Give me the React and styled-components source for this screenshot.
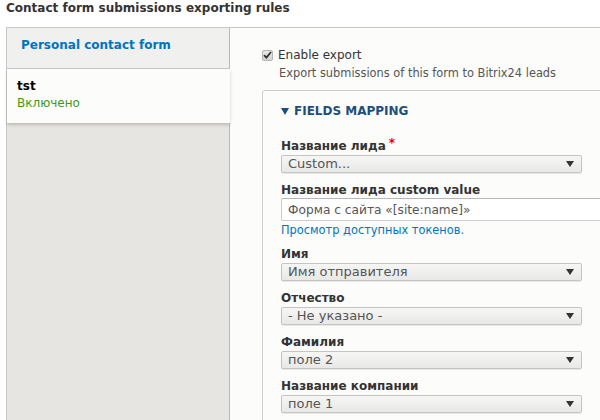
import React from "react";
import styled, { createGlobalStyle } from "styled-components";

const Global = createGlobalStyle`
  html, body { margin: 0; padding: 0; background: #fff; overflow: hidden; }
  body { font-family: "DejaVu Sans", "Liberation Sans", sans-serif; color: #333; }
  * { box-sizing: border-box; }
`;

const Page = styled.div`
  width: 600px;
  height: 420px;
  padding-left: 6px;
  overflow: hidden;
`;

const Title = styled.h2`
  margin: 0;
  font-size: 12px;
  font-weight: bold;
  line-height: 16px;
  padding-bottom: 11px;
  color: #333;
`;

const Tabs = styled.div`
  display: flex;
  border-top: 1px solid #c8c8c8;
  border-left: 1px solid #c8c8c8;
  height: 400px;
  width: 700px;
`;

const Menu = styled.div`
  width: 223px;
  flex: none;
  background: #e6e5e1;
  border-right: 1px solid #b8b8b6;
  display: flex;
  flex-direction: column;
`;

const MenuItem = styled.div`
  background: ${(p) => (p.$active ? "#fcfcfa" : "#f0f0ee")};
  border-bottom: ${(p) => (p.$active ? "0" : "1px solid #c8c8c8")};
  padding: ${(p) => (p.$active ? "9px 10px 11px" : "9px 14px 15px")};
  margin-right: ${(p) => (p.$active ? "-1px" : "0")};
  position: relative;
  z-index: ${(p) => (p.$active ? 1 : 0)};
  box-shadow: ${(p) => (p.$active ? "0 2px 3px rgba(0,0,0,0.18)" : "none")};
`;

const TabName = styled.div`
  font-size: 12px;
  font-weight: bold;
  line-height: ${(p) => (p.$active ? "17px" : "16px")};
  color: ${(p) => (p.$active ? "#000" : "#0074bd")};
`;

const TabSummary = styled.div`
  font-size: 12px;
  line-height: 17px;
  color: #3a9a1a;
`;

const Pane = styled.div`
  flex: 1;
  background: #fcfcfa;
  padding: 19px 0 0 32px;
`;

const CheckRow = styled.label`
  display: flex;
  align-items: center;
  gap: 5px;
  font-size: 12px;
  line-height: 16px;
  color: #333;
`;

const CheckBox = styled.span`
  width: 11px;
  height: 11px;
  border: 1px solid #b4b4b4;
  border-radius: 2px;
  background: linear-gradient(#e8e8e8, #d4d4d4);
  display: flex;
  align-items: center;
  justify-content: center;
`;

const Description = styled.div`
  font-size: 11.4px;
  line-height: 14px;
  color: #555;
  padding-left: 17px;
  margin-top: 3px;
`;

const Fieldset = styled.div`
  margin-top: 10px;
  width: 360px;
  border: 1px solid #cccccc;
  border-radius: 3px;
  background: #fcfcfa;
  padding: 13px 0 0 18px;
  height: 400px;
`;

const Legend = styled.div`
  display: flex;
  align-items: center;
  gap: 5px;
  font-size: 12px;
  font-weight: bold;
  line-height: 14px;
  text-transform: uppercase;
  color: #1d4f7c;
  margin-bottom: 20px;
`;

const Field = styled.div`
  display: flex;
  flex-direction: column;
  margin-bottom: ${(p) => p.$mb || 9}px;
`;

const Label = styled.div`
  font-size: 12px;
  font-weight: bold;
  line-height: 16px;
  color: #333;
  margin-bottom: ${(p) => p.$mb ?? 1}px;
`;

const Required = styled.span`
  color: #e00;
  font-size: 12px;
  margin-left: 3px;
  position: relative;
  top: -3px;
`;

const Select = styled.div`
  width: 301px;
  height: 18px;
  border: 1px solid #c4c4c4;
  border-radius: 2px;
  background: linear-gradient(#f6f6f5, #e8e8e6);
  box-shadow: 0 1px 1px rgba(0,0,0,0.08);
  display: flex;
  align-items: center;
  justify-content: space-between;
  padding: 0 7px 0 6px;
  font-size: 13px;
  color: #555;
  line-height: 16px;
`;

const Input = styled.div`
  width: 330px;
  height: 23px;
  border: 1px solid #cccccc;
  border-top-color: #b8b8b8;
  border-radius: 2px;
  background: #fff;
  display: flex;
  align-items: center;
  padding-left: 6px;
  font-size: 12.2px;
  color: #555;
`;

const TokenLink = styled.a`
  font-size: 11.4px;
  line-height: 16px;
  color: #0074bd;
  text-decoration: none;
  margin-top: 1px;
`;

const Arrow = () => (
  <svg width="8" height="6" viewBox="0 0 8 6">
    <path d="M0 0 H8 L4 6 Z" fill="#333" />
  </svg>
);

const Triangle = () => (
  <svg width="8" height="7" viewBox="0 0 8 7">
    <path d="M0 0 H8 L4 7 Z" fill="#1d4f7c" />
  </svg>
);

const Check = () => (
  <svg width="9" height="8" viewBox="0 0 9 8">
    <path d="M1 4.2 L3.4 6.6 L8 1" stroke="#333" strokeWidth="1.8" fill="none" />
  </svg>
);

const selects = [
  { label: "Имя", value: "Имя отправителя" },
  { label: "Отчество", value: "- Не указано -" },
  { label: "Фамилия", value: "поле 2" },
  { label: "Название компании", value: "поле 1" },
];

export default function App() {
  return (
    <Page>
      <Global />
      <Title>Contact form submissions exporting rules</Title>
      <Tabs>
        <Menu>
          <MenuItem>
            <TabName>Personal contact form</TabName>
          </MenuItem>
          <MenuItem $active>
            <TabName $active>tst</TabName>
            <TabSummary>Включено</TabSummary>
          </MenuItem>
        </Menu>
        <Pane>
          <CheckRow>
            <CheckBox>
              <Check />
            </CheckBox>
            Enable export
          </CheckRow>
          <Description>Export submissions of this form to Bitrix24 leads</Description>
          <Fieldset>
            <Legend>
              <Triangle />
              Fields mapping
            </Legend>
            <Field>
              <Label>
                Название лида<Required>*</Required>
              </Label>
              <Select>
                <span>Custom...</span>
                <Arrow />
              </Select>
            </Field>
            <Field $mb={8}>
              <Label $mb={0}>Название лида custom value</Label>
              <Input>Форма с сайта «[site:name]»</Input>
              <TokenLink href="#">Просмотр доступных токенов.</TokenLink>
            </Field>
            {selects.map((s) => (
              <Field key={s.label}>
                <Label>{s.label}</Label>
                <Select>
                  <span>{s.value}</span>
                  <Arrow />
                </Select>
              </Field>
            ))}
          </Fieldset>
        </Pane>
      </Tabs>
    </Page>
  );
}
